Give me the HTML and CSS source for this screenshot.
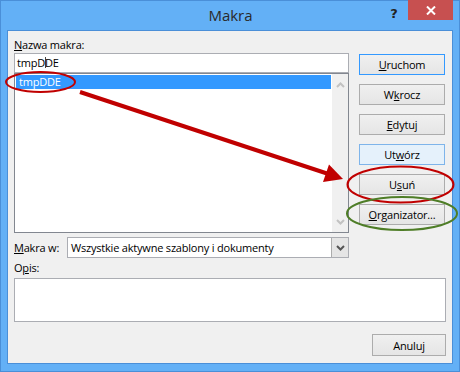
FILE: index.html
```html
<!DOCTYPE html>
<html lang="pl">
<head>
    <meta charset="UTF-8">
    <title>Makra</title>
    <link rel="stylesheet" href="styles.css">
</head>
<body>
    <div class="window">
        <div class="titlebar">
            <span class="title">Makra</span>
            <span class="help">?</span>
            <span class="close">
                <svg width="10" height="9" viewBox="0 0 10 9"><path d="M1 0.5 L9 8.5 M9 0.5 L1 8.5" stroke="#fff" stroke-width="2"/></svg>
            </span>
        </div>
        <div class="client">
            <div class="main">
                <div class="left">
                    <div class="lbl"><u>N</u>azwa makra:</div>
                    <div class="name-input">tmpD<span class="caret"></span>DE</div>
                    <div class="listbox">
                        <div class="items">
                            <div class="item selected">tmpDDE</div>
                        </div>
                        <div class="scrollbar">
                            <svg width="9" height="6" viewBox="0 0 9 6"><path d="M1 5 L4.5 1.5 L8 5" fill="none" stroke="#c2c2c2" stroke-width="2"/></svg>
                            <svg width="9" height="6" viewBox="0 0 9 6"><path d="M1 1 L4.5 4.5 L8 1" fill="none" stroke="#c2c2c2" stroke-width="2"/></svg>
                        </div>
                    </div>
                </div>
                <div class="buttons">
                    <button class="btn default"><u>U</u>ruchom</button>
                    <button class="btn">W<u>k</u>rocz</button>
                    <button class="btn"><u>E</u>dytuj</button>
                    <button class="btn hover">Ut<u>w</u>órz</button>
                    <button class="btn">U<u>s</u>uń</button>
                    <button class="btn"><u>O</u>rganizator...</button>
                </div>
            </div>
            <div class="source-row">
                <span class="source-lbl"><u>M</u>akra w:</span>
                <div class="combo">
                    <span class="combo-text">Wszystkie aktywne szablony i dokumenty</span>
                    <span class="combo-btn">
                        <svg width="9" height="6" viewBox="0 0 9 6"><path d="M1 1 L4.5 4.5 L8 1" fill="none" stroke="#555" stroke-width="2"/></svg>
                    </span>
                </div>
            </div>
            <div class="lbl opis-lbl">O<u>p</u>is:</div>
            <div class="desc"></div>
            <div class="footer">
                <button class="btn cancel">Anuluj</button>
            </div>
        </div>

        <!-- annotations drawn over the dialog -->
        <svg class="annotations" width="460" height="372" viewBox="0 0 460 372">
            <ellipse cx="40.5" cy="82" rx="34.5" ry="10" fill="none" stroke="#c00000" stroke-width="2"/>
            <line x1="80" y1="92" x2="327" y2="173.5" stroke="#c00000" stroke-width="4"/>
            <polygon points="343,179 323,182 329,164.5" fill="#c00000"/>
            <ellipse cx="400.5" cy="184.5" rx="53" ry="18" fill="none" stroke="#c00000" stroke-width="2"/>
            <ellipse cx="402" cy="213.5" rx="55" ry="16.5" fill="none" stroke="#4e7d27" stroke-width="2"/>
        </svg>
    </div>
</body>
</html>
```

FILE: styles.css
```css
body {
    margin: 0;
    font-family: "Open Sans", "Liberation Sans", sans-serif;
    font-size: 11px;
    letter-spacing: -0.2px;
    color: #000;
}

.window {
    position: relative;
    box-sizing: border-box;
    width: 460px;
    height: 372px;
    background-color: #63b0f6;
    border: 1px solid #4a8fd8;
    padding: 0 6px 7px 6px;
    display: flex;
    flex-direction: column;
}

.titlebar {
    height: 29px;
    display: flex;
    align-items: flex-start;
}

.title {
    flex: 1;
    padding-left: 70px;
    text-align: center;
    font-family: "Open Sans", sans-serif;
    font-size: 15px;
    letter-spacing: 0;
    line-height: 29px;
    color: #2a2a2a;
}

.help {
    width: 20px;
    margin-top: 5px;
    margin-right: 4px;
    text-align: center;
    font-family: "DejaVu Sans", sans-serif;
    font-weight: bold;
    font-size: 13px;
    color: #222;
}

.close {
    width: 45px;
    height: 20px;
    margin-top: -1px;
    background-color: #c75050;
    display: flex;
    align-items: center;
    justify-content: center;
}

.client {
    flex: 1;
    background-color: #f0f0f0;
    border: 1px solid #4a8fd8;
    padding: 7px 6px 0 6px;
    display: flex;
    flex-direction: column;
}

.main {
    display: grid;
    grid-template-columns: 335px 86px;
    column-gap: 10px;
}

.lbl {
    height: 15px;
    line-height: 14px;
}

.name-input {
    box-sizing: border-box;
    height: 20px;
    background: #fff;
    border: 1px solid #abadb3;
    padding-left: 2px;
    line-height: 18px;
}

.caret {
    display: inline-block;
    width: 1px;
    height: 11px;
    margin: 0 -1px -1px 0;
    background: #444;
}

.listbox {
    box-sizing: border-box;
    height: 160px;
    background: #fff;
    border: 1px solid #828790;
    display: flex;
}

.items {
    flex: 1;
    padding: 1px;
}

.item {
    height: 14px;
    line-height: 14px;
    padding-left: 3px;
}

.item.selected {
    background-color: #3399ff;
    color: #fff;
}

.scrollbar {
    width: 16px;
    background: #f0f0f0;
    display: flex;
    flex-direction: column;
    align-items: center;
    justify-content: space-between;
    padding: 8px 0 7px;
}

.buttons {
    padding-top: 16px;
    display: flex;
    flex-direction: column;
    gap: 9px;
}

.btn {
    box-sizing: border-box;
    height: 21px;
    padding: 0;
    font-family: inherit;
    font-size: 11px;
    letter-spacing: -0.2px;
    color: #000;
    background: linear-gradient(#f0f0f0, #e5e5e5);
    border: 1px solid #acacac;
}

.btn.default {
    border-color: #3399ff;
}

.btn.hover {
    background: #e5f1fb;
    border-color: #7eb4ea;
}

.source-row {
    margin-top: 4px;
    display: flex;
    align-items: center;
    width: 335px;
}

.source-lbl {
    width: 53px;
}

.combo {
    flex: 1;
    box-sizing: border-box;
    height: 21px;
    background: #fff;
    border: 1px solid #abadb3;
    display: flex;
}

.combo-text {
    flex: 1;
    padding-left: 3px;
    line-height: 19px;
}

.combo-btn {
    width: 16px;
    background: #e5e5e5;
    border-left: 1px solid #acacac;
    display: flex;
    align-items: center;
    justify-content: center;
}

.opis-lbl {
    height: 20px;
    line-height: 20px;
}

.desc {
    box-sizing: border-box;
    height: 44px;
    background: #fff;
    border: 1px solid #abadb3;
}

.footer {
    margin-top: 12px;
    display: flex;
    justify-content: flex-end;
}

.btn.cancel {
    width: 74px;
    height: 22px;
}

.annotations {
    position: absolute;
    left: -1px;
    top: -1px;
    pointer-events: none;
}
```
